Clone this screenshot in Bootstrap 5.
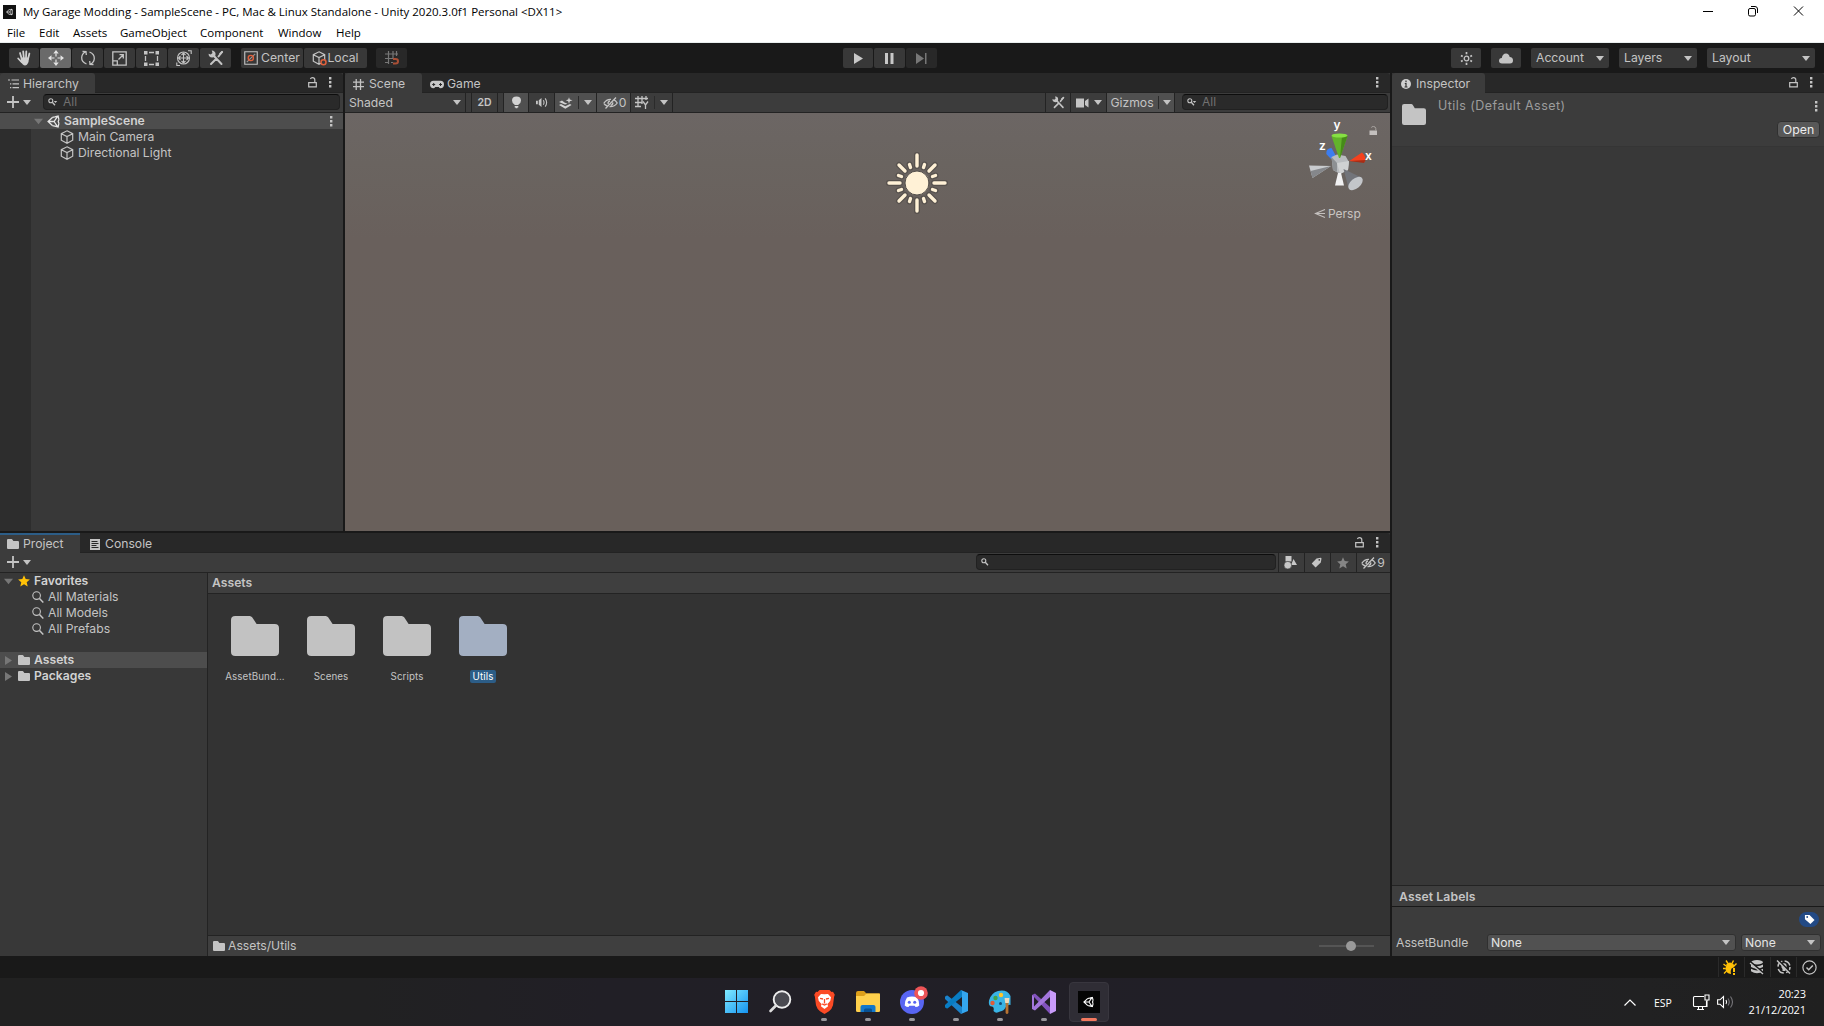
<!DOCTYPE html>
<html lang="en">
<head>
<meta charset="utf-8">
<title>My Garage Modding - SampleScene - Unity 2020.3.0f1 Personal</title>
<link href="https://cdn.jsdelivr.net/npm/bootstrap@5.3.0/dist/css/bootstrap.min.css" rel="stylesheet">
<style>
body{width:1824px;height:1026px;overflow:hidden;background:#191919;color:#c4c4c4;font:12.200px/16px Inter,"Liberation Sans",sans-serif}
svg{display:block;flex:none;overflow:visible}
.titlebar,.menubar{background:#fff;color:#000;font-family:"Open Sans","Noto Sans",sans-serif;white-space:nowrap}
.titlebar{height:24px;font-size:11.500px;padding-left:3px}
.menubar{height:19px;font-size:11.500px;border-bottom:1px solid #e9eeee}
.wtitle{margin-left:7px}
.m1{margin-left:7px;width:32px}.m2{width:34px}.m3{width:47px}.m4{width:80px}.m5{width:78px}.m6{width:58px}
.toolbar-main{height:30px;padding:0 9px}
.tool{height:20px;background:#383838;border-radius:2px;display:flex;align-items:center;justify-content:center;color:#c4c4c4}
.tool.on{background:#6a6a6a}
.tool.off{background:#282828}
.w30{width:30px}.w31{width:31px}.w62{width:62px}.w63{width:63px}.w78{width:78px}.w108{width:108px}
.gap1{gap:1px}.gap10{gap:10px}.gap12{gap:12px}
.drop{justify-content:space-between;padding:0 5px 0 5px}
.panel{background:#383838;display:flex;flex-direction:column;overflow:hidden}
.tabs{height:19px;background:#282828;display:flex;border-radius:3px 3px 0 0;flex:none}
.tabs .gap12{padding-right:11px}
.utab{background:#3c3c3c;height:20px;display:flex;align-items:center;padding-top:2px;border-radius:3px 3px 0 0;position:relative;z-index:1}
.utab.idle{background:none}
.bar{height:21px;background:#3c3c3c;border-top:1px solid #232323;border-bottom:1px solid #232323;display:flex;align-items:center;flex:none;padding-bottom:1px}
.find{height:16px;background:#2a2a2a;border:1px solid #212121;border-top-color:#0d0d0d;border-radius:4px;color:#717171;display:flex;align-items:center;padding-left:4px}
.find svg{color:#c4c4c4}
.find span{margin-left:5px;font-size:12px;line-height:12px}
.cell{height:19px;border-right:1px solid #232323;display:flex;align-items:center;justify-content:center;flex:none;margin-bottom:-1px}
.hi{background:#505050}
.sep{width:1px;height:13px;background:#2b2b2b}
.line16{height:16px;display:flex;align-items:center;flex:none;white-space:nowrap}
.line16 span{margin-left:4px}
.sel{background:#4d4d4d}
.fw-s{font-weight:600}
.strong-label{font-weight:600;color:#d2d2d2}
.gutter{width:31px;background:#2d2d2d}
.scene{flex:1;position:relative;background:linear-gradient(#6c6664 0,#6a6460 12%,#69605c 30%,#69605b 100%)}
.gizmo{position:absolute;left:960px;top:0}
.sunny{position:absolute;left:541px;top:39px}
.favs{width:208px;border-right:1px solid #232323;flex:none}
.asset{width:76px;text-align:center;font-size:9.800px;letter-spacing:.08px}
.asset svg{margin:0 auto 13px}
.asset .lbl{display:inline-block;line-height:13px;padding:0 3px;border-radius:2px}
.picked .lbl{background:#2c5d87;color:#fff}
.select-u{height:17px;background:#515151;border:1px solid #303030;border-radius:3px;color:#e4e4e4;display:flex;align-items:center;justify-content:space-between;padding:0 5px 0 3px}
.open-btn{width:43px;height:17px;background:#585858;border:1px solid #303030;color:#eee;font-size:12.300px;line-height:14px}
.insname{font-size:12.500px;letter-spacing:.46px;margin-left:12px;color:#9d9d9d}
.abname{width:91px;padding-top:1px}
.stat{width:26px;height:20px;border-left:1px solid #2a2a2a;display:flex;align-items:center;justify-content:center}
.taskbar{height:48px;background:linear-gradient(90deg,#212121 0,#212122 20%,#211f26 33%,#211f27 70%,#212122 90%,#202020);color:#fff;font-family:"Open Sans","Noto Sans",sans-serif;padding-top:4px}
.apps{margin-left:716px}
.app{width:40px;height:40px;margin-right:4px;display:flex;flex-direction:column;align-items:center;padding-top:8px;position:relative}
.app::after{content:"";position:absolute;bottom:1px;width:6px;height:3px;border-radius:2px;background:#98979b}
.app.plain::after{display:none}
.app.act{background:#2f2d35;border:1px solid #38363e;border-radius:4px;margin-left:1px}
.app.act::after{background:#f3795f;width:16px;bottom:0}
.tray{height:40px;padding-right:18px}
.tray-lang{font-size:10.500px;margin-left:18px;width:20px;padding-top:2px}
.tray-net{margin-left:19px}.tray-vol{margin-left:7px;margin-right:1px}
.clock{font-size:11px;width:71px;letter-spacing:-.1px}
</style>
<script src="https://cdn.jsdelivr.net/npm/bootstrap@5.3.0/dist/js/bootstrap.bundle.min.js"></script>
</head>
<body>
<svg width="0" height="0" class="position-absolute">
<symbol id="tri" viewBox="0 0 8 5"><path d="M0 0h8L4 5z" fill="currentColor"/></symbol>
<symbol id="dots" viewBox="0 0 3 11"><path d="M0 0h2.4v2.4H0zM0 4h2.4v2.4H0zM0 8h2.4v2.4H0z" fill="currentColor"/></symbol>
<symbol id="lock" viewBox="0 0 9 11"><path d="M.7 5.7h7.6v4.1H.7zM6.8 5.5V2.8Q6.8.7 4.5.7 2.9.7 2.4 1.9" fill="none" stroke="currentColor" stroke-width="1.2"/></symbol>
<symbol id="folder" viewBox="0 0 45 40" preserveAspectRatio="none"><path d="M4 0H17.500Q19 0 20 1.600L24 8H41Q45 8 45 12V36Q45 40 41 40H4Q0 40 0 36V4Q0 0 4 0z" fill="currentColor"/></symbol>
<symbol id="cube" viewBox="0 0 14 14"><path d="M7 .8 12.700 3.700V10.200L7 13.300 1.300 10.200V3.700zM1.300 3.700 7 6.500 12.700 3.700M7 6.500V13.300" fill="none" stroke="currentColor" stroke-width="1.2"/></symbol>
<symbol id="mag" viewBox="0 0 12 12"><circle cx="4.600" cy="4.600" r="3.800" fill="none" stroke="currentColor" stroke-width="1.100"/><path d="M7.500 7.500 11.300 11.500" stroke="currentColor" stroke-width="1.500"/></symbol>
<symbol id="smag" viewBox="0 0 10 8"><circle cx="2.800" cy="2.800" r="2" fill="none" stroke="currentColor" stroke-width="1.100"/><path d="M4.300 4.300 7 7.300" stroke="currentColor" stroke-width="1.300"/></symbol>
<symbol id="smagd" viewBox="0 0 10 8"><use href="#smag" width="10" height="8"/><path d="M5.800 3h3.400L7.500 5z" fill="currentColor"/></symbol>
<symbol id="plus" viewBox="0 0 12 12"><path d="M6 0v12M0 6h12" stroke="currentColor" stroke-width="1.800"/></symbol>
<symbol id="wrench" viewBox="0 0 16 16"><path d="M5 5 13.500 14M3 14 8 9M10.500 6.500 14 2" stroke="currentColor" stroke-width="2" stroke-linecap="round"/><path d="M3.700.6A3.500 3.500 0 1 1 .6 3.800L2.800 4.500 4.500 3z" fill="currentColor"/><path d="M11 3.500 14 .8 15.200 2 12.500 5z" fill="currentColor"/></symbol>
<symbol id="eye" viewBox="0 0 15 12"><path d="M.8 6.300Q3.500 2 8 2.300M10.500 2.600Q13 3.800 14.200 6Q11.500 10 6.500 9.700M4.200 8.900Q2 8 .8 6.300M13 .5 2.500 11.500M5.200 7.200Q4.500 4.500 7 3.800M9.800 5.500Q10 8 7.600 8.300" fill="none" stroke="currentColor" stroke-width="1.300"/></symbol>
<symbol id="star" viewBox="0 0 12 12"><path d="M6 .2 7.700 4.100 11.900 4.500 8.700 7.300 9.700 11.500 6 9.200 2.300 11.500 3.300 7.300.1 4.500 4.300 4.100z" fill="currentColor"/></symbol>
<symbol id="tag" viewBox="0 0 12 12"><path d="M6 1.500 10.500.8Q11.500.8 11.400 2L10.700 6 5 11.400.8 7.200z" fill="currentColor"/><circle cx="9" cy="3.200" r=".9" fill="#333"/></symbol>
<symbol id="unity" viewBox="0 0 24 24"><path d="M10 4.500 2 12 10 19.500M14.500 3.500 20.500 2 22 8.500M14.500 20.500 20.500 22 22 15.500M2.500 12H13L19.500 2.500M13 12 19.500 21.500M10 4.500 14.500 3.500M10 19.500 14.500 20.500M22 8.500 20.700 12 22 15.500" fill="none" stroke="currentColor" stroke-width="2.400"/></symbol>
<symbol id="spk" viewBox="0 0 14 12"><path d="M1 4h2v4H1zM4 3.500 7 1v10L4 8.500z" fill="currentColor"/><path d="M9 3.500q1.500 2.500 0 5M11 1.500q3.200 4.500 0 9" fill="none" stroke="currentColor" stroke-width="1.200"/></symbol>
<symbol id="hash" viewBox="0 0 12 12"><path d="M3.500 0v12M8.200 0v12M0 3.500h12M0 8.200h12" stroke="currentColor" stroke-width="1.400"/></symbol>
</svg>

<header>
<div class="titlebar d-flex align-items-center">
<svg width="13" height="14" viewBox="0 0 13 14"><path d="M0 0h13v14H0z" fill="#111"/><use href="#unity" x="3" y="3.500" width="7" height="7" color="#fff"/></svg>
<span class="wtitle">My Garage Modding - SampleScene - PC, Mac &amp; Linux Standalone - Unity 2020.3.0f1 Personal &lt;DX11&gt;</span>
<svg class="ms-auto" width="122" height="20" viewBox="0 0 122 20" fill="none" stroke="#000"><path d="M1 9.500h10M92 4.500 101 13.500M101 4.500 92 13.500"/><rect x="46.500" y="6.500" width="7" height="7.500" rx="1.500"/><path d="M49 4.500h4Q55.500 4.500 55.500 7v4"/></svg>
</div>
<nav class="menubar d-flex align-items-center">
<span class="m1">File</span><span class="m2">Edit</span><span class="m3">Assets</span><span class="m4">GameObject</span><span class="m5">Component</span><span class="m6">Window</span><span>Help</span>
</nav>
</header>

<section class="toolbar-main d-flex align-items-center" aria-label="Tools">
<div class="d-flex w-100">
 <div class="d-flex gap1">
 <div class="tool w30"><svg width="15" height="16" viewBox="0 0 15 16"><path d="M4.800 9 3 3M6.800 8 6.200 1.500M9 8 9.300 1.500M11 9 12.400 3.500M4.500 12 1.200 8.500" stroke="#d0d0d0" stroke-width="1.800" stroke-linecap="round"/><path d="M4 7.500h8L11.500 12Q10 15.500 8 15.500 6 15.500 3.500 11.500z" fill="#d0d0d0"/></svg></div>
 <div class="tool w31 on"><svg width="16" height="16" viewBox="0 0 16 16"><path d="M8 0 10.700 3.500H5.300zM8 16 5.300 12.500h5.400zM0 8 3.500 5.300v5.400zM16 8 12.500 10.700V5.300z" fill="#e4e4e4"/><path d="M8 3.500v3M8 9.500v3M3.500 8h3M9.500 8h3" stroke="#e4e4e4" stroke-width="1.200"/></svg></div>
 <div class="tool w31"><svg width="16" height="16" viewBox="0 0 16 16" fill="none" stroke="#c4c4c4" stroke-width="1.300"><path d="M6.500 14Q1.500 12 1.700 7.500 2 3.500 5.500 2M9.500 2Q14.500 4 14.300 8.500 14 12.500 10.500 14M2.500 1.500 6 1.700 6.300 5M13.500 14.500 10 14.300 9.700 11"/></svg></div>
 <div class="tool w31"><svg width="15" height="15" viewBox="0 0 15 15" fill="none" stroke="#c4c4c4" stroke-width="1.300"><path d="M.8.8h13.400v13.400H.8zM.8 9.800h4.500v4.400M6.500 8.500 11.200 3.800M7.500 3.700h3.800v3.800"/></svg></div>
 <div class="tool w31"><svg width="15" height="15" viewBox="0 0 15 15"><path d="M0 0h3.500v3.500H0zM11.500 0H15v3.500h-3.500zM0 11.500h3.500V15H0zM11.500 11.500H15V15h-3.500z" fill="#c4c4c4"/><path d="M5 1.500h5M5 13.500h5M1.500 5v5M13.500 5v5" stroke="#c4c4c4" stroke-width="1.300"/></svg></div>
 <div class="tool w31"><svg width="16" height="16" viewBox="0 0 16 16" fill="none" stroke="#c4c4c4" stroke-width="1.100"><circle cx="7.500" cy="8" r="6"/><path d="M7.500 3v10M2.500 8h10M5.500 5l2-2 2 2M5.500 11l2 2 2-2M4.500 6l-2 2 2 2M10.500 6l2 2-2 2M12 .8h3.200V4M.8 12.500v3H4"/></svg></div>
 <div class="tool w31"><svg width="16" height="16"><use href="#wrench"/></svg></div>
 </div>
 <div class="d-flex gap1" style="margin-left:10px">
 <div class="tool w62"><svg width="14" height="14" viewBox="0 0 15 15" fill="none" stroke="#c4c4c4" stroke-width="1.200"><path d="M.8.8h13.400v13.400H.8z"/><path d="M3 12 12 3" stroke="#999"/><circle cx="7.300" cy="7.500" r="2.800" stroke="#e0603c" stroke-width="1.500"/></svg><span style="margin-left:3px">Center</span></div>
 <div class="tool w63"><svg width="15" height="15" viewBox="0 0 15 15"><use href="#cube" width="14" height="14"/><circle cx="11.500" cy="11.300" r="2.500" fill="#383838" stroke="#e0603c" stroke-width="1.500"/></svg><span>Local</span></div>
 </div>
 <div class="tool off w31" style="margin-left:9px"><svg width="14" height="14" viewBox="0 0 14 14" fill="none"><path d="M3.500 0v13M8 0v7M11.500 0v5M0 3h13M0 7.500h8M0 11.500h4M6 11.500h2" stroke="#777" stroke-width="1.200"/><path d="M8 8h2.500q2.500 0 2.500 2.200 0 2.300-2.500 2.300H8" stroke="#a94f35" stroke-width="2"/></svg></div>
 <div class="d-flex gap1" style="margin-left:436px">
 <div class="tool w30"><svg width="9" height="11"><path d="M0 0 9 5.500 0 11z" fill="#c8c8c8"/></svg></div>
 <div class="tool w31"><svg width="9" height="11"><path d="M0 0h3v11H0zM5.500 0h3v11h-3z" fill="#c8c8c8"/></svg></div>
 <div class="tool w31 off"><svg width="11" height="11"><path d="M0 0 8 5.500 0 11zM9 0h1.500v11H9z" fill="#777"/></svg></div>
 </div>
 <div class="d-flex ms-auto gap10">
 <div class="tool w30"><svg width="13" height="13" viewBox="0 0 13 13"><circle cx="6.500" cy="6.500" r="2.300" fill="none" stroke="#c4c4c4" stroke-width="1.300"/><path d="M6.500 0v2.200M6.500 10.800V13M1 3.400l1.700 1M10.300 8.600l1.700 1M1 9.600l1.700-1M10.300 4.400l1.700-1" stroke="#c4c4c4" stroke-width="1.700"/></svg></div>
 <div class="tool w30"><svg width="14" height="11" viewBox="0 0 14 11"><path d="M3 10.500Q0 10.500 0 7.800 0 5.200 2.800 5 3.500.4 7 .4 10 .4 10.700 4 14 4.300 14 7.500 14 10.500 11 10.500z" fill="#c4c4c4"/></svg></div>
 <div class="tool drop w78">Account<svg width="8" height="5"><use href="#tri"/></svg></div>
 <div class="tool drop w78">Layers<svg width="8" height="5"><use href="#tri"/></svg></div>
 <div class="tool drop w108">Layout<svg width="8" height="5"><use href="#tri"/></svg></div>
 </div>
</div>
</section>

<main class="d-flex" style="height:883px;gap:2px">
<div class="d-flex flex-column" style="width:1390px;gap:2px">
 <div class="d-flex" style="height:458px;gap:2px">
 <section class="panel" style="width:343px">
  <div class="tabs"><div class="utab" style="width:95px;padding-left:8px"><svg width="11" height="10" viewBox="0 0 11 10"><path d="M0 1h2M3.500 1H11M2 4.800h1.300M4.500 4.800H11M2 8.600h1.300M4.500 8.600H11" stroke="#c4c4c4" stroke-width="1.200"/></svg><span style="margin-left:4px">Hierarchy</span></div>
  <div class="ms-auto d-flex align-items-center gap12"><svg width="9" height="11"><use href="#lock"/></svg><svg width="3" height="11"><use href="#dots"/></svg></div></div>
  <div class="bar" style="padding-left:7px"><svg width="12" height="12"><use href="#plus"/></svg><svg style="margin-left:4px" width="8" height="5"><use href="#tri"/></svg><div class="find" style="width:297px;margin-left:12px"><svg width="10" height="8"><use href="#smagd"/></svg><span>All</span></div></div>
  <div class="line16 sel" style="padding-left:34px"><svg width="9" height="7" color="#777"><use href="#tri"/></svg><svg style="margin-left:4px" width="13" height="13" color="#e6e6e6"><use href="#unity"/></svg><span class="strong-label">SampleScene</span><svg class="ms-auto" style="margin-right:10px" width="3" height="11"><use href="#dots"/></svg></div>
  <div class="d-flex flex-fill"><div class="gutter"></div><div class="flex-fill" style="padding-left:29px">
   <div class="line16"><svg width="14" height="14"><use href="#cube"/></svg><span>Main Camera</span></div>
   <div class="line16"><svg width="14" height="14"><use href="#cube"/></svg><span>Directional Light</span></div></div></div>
 </section>
 <section class="panel" style="width:1045px">
  <div class="tabs"><div class="utab" style="width:77px;padding-left:8px"><svg width="11" height="11"><use href="#hash"/></svg><span style="margin-left:5px">Scene</span></div>
  <div class="utab idle" style="padding-left:8px"><svg width="14" height="9" viewBox="0 0 14 9"><path d="M3.500.8h7Q14 .8 14 4.500T10.500 8.200Q9.500 8.200 8.800 7H5.200Q4.500 8.200 3.500 8.200 0 8.200 0 4.500T3.500.8" fill="#c8c8c8"/><path d="M2.200 4.500h3M3.700 3v3M9 4.500h3M10.500 3v3" stroke="#282828"/></svg><span style="margin-left:3px">Game</span></div>
  <svg class="ms-auto" style="margin:4px 11px 0 0" width="3" height="11"><use href="#dots"/></svg></div>
  <div class="bar">
   <div class="cell justify-content-between" style="width:121px;padding:0 4px"><span>Shaded</span><svg width="8" height="5"><use href="#tri"/></svg></div>
   <div class="cell" style="width:6px"></div>
   <div class="cell fw-s" style="width:26px;font-size:10.500px">2D</div>
   <div class="cell" style="width:6px"></div>
   <div class="cell hi" style="width:25px"><svg width="9" height="13" viewBox="0 0 9 13"><path d="M2.500 8.500Q0 7 0 4.400 0 .4 4.500.4T9 4.400Q9 7 6.500 8.500V9h-4zM2.700 10h3.600v1.500H5.500l-.2.800H3.700l-.2-.8h-.8z" fill="#d2d2d2"/></svg></div>
   <div class="cell" style="width:26px"><svg width="13" height="11"><use href="#spk"/></svg></div>
   <div class="cell hi" style="width:42px;gap:5px"><svg width="14" height="12" viewBox="0 0 14 12"><path d="M0 5 3 3.500 5.500 5.500 8.500 6.800 6 7.500zM0 8 2 7 6.300 9.200 11 7 12.500 8 6.300 11.700zM10 .2l.8 2.300 2.700.8-2.700.9-.8 2.500-.8-2.500-2.400-.9 2.400-.8z" fill="#d2d2d2"/></svg><span class="sep"></span><svg width="8" height="5"><use href="#tri"/></svg></div>
   <div class="cell hi" style="width:34px;padding-left:2px"><svg width="15" height="12"><use href="#eye"/></svg><span style="margin-left:1px">0</span></div>
   <div class="cell" style="width:42px;gap:5px"><svg width="14" height="13" viewBox="0 0 14 13" fill="none" stroke="#c4c4c4" stroke-width="1.300"><path d="M3 0v11M7 0v8M11 0v4M0 2.500h13M0 6.500h7M0 10.500h6M8 5.500l2.500 3.500L13 5.500M10.500 9v4"/></svg><span class="sep"></span><svg width="8" height="5"><use href="#tri"/></svg></div>
   <div class="cell ms-auto" style="width:1px"></div>
   <div class="cell" style="width:25px"><svg width="13" height="13"><use href="#wrench"/></svg></div>
   <div class="cell" style="width:36px;gap:5px"><svg width="13" height="10" viewBox="0 0 13 10"><path d="M0 .5h8v9H0zM9 3l3.500-2.500v9L9 7z" fill="#c4c4c4"/></svg><svg width="8" height="5"><use href="#tri"/></svg></div>
   <div class="cell hi" style="width:68px;gap:4px"><span>Gizmos</span><span class="sep"></span><svg width="8" height="5"><use href="#tri"/></svg></div>
   <div class="find" style="width:206px;margin:0 2px 0 7px"><svg width="10" height="8"><use href="#smagd"/></svg><span>All</span></div>
  </div>
  <div class="scene">
  <svg class="sunny" width="62" height="62" viewBox="-31 -31 62 62" stroke-linecap="round">
  <path id="rays" d="M0-28V-17M0 28V17M-28 0H-17M28 0H17M-18-18-12-12M18-18 12-12M-18 18-12 12M18 18 12 12M-7.500-18.500-6.500-15.500M7.500-18.500 6.500-15.500M-7.500 18.500-6.500 15.500M7.500 18.500 6.500 15.500M-18.500-7.500-15.500-6.500M18.500-7.500 15.500-6.500M-18.500 7.500-15.500 6.500M18.500 7.500 15.500 6.500" stroke="#484440" stroke-width="6" opacity=".55"/>
  <path d="M0-28V-17M0 28V17M-28 0H-17M28 0H17M-18-18-12-12M18-18 12-12M-18 18-12 12M18 18 12 12M-7.500-18.500-6.500-15.500M7.500-18.500 6.500-15.500M-7.500 18.500-6.500 15.500M7.500 18.500 6.500 15.500M-18.500-7.500-15.500-6.500M18.500-7.500 15.500-6.500M-18.500 7.500-15.500 6.500M18.500 7.500 15.500 6.500" stroke="#fff1d6" stroke-width="3.400"/><circle r="12" fill="#fff1d6" stroke="#55504b"/></svg>
  <svg class="gizmo" width="85" height="115" viewBox="1305 113 85 115">
   <path d="M1331 166 1309 165.500 1312.500 178z" fill="#c9cbce"/><path d="M1331 166 1310.500 171 1312.500 178z" fill="#85878b"/>
   <path d="M1331.500 148Q1326 148 1326.300 154L1331 159 1336 156z" fill="#3c7df0"/>
   <path d="M1331.500 157 1337 154.500 1345.500 156 1349 162 1348 170 1340 174 1333 170z" fill="#b9bcbf"/><path d="M1331.500 157 1337 163 1337 172 1333 170z" fill="#8d9093"/><path d="M1337 163 1349 161 1348 170 1340 174z" fill="#cfd1d2"/>
   <path d="M1343.500 169 1362.500 178 1348.500 188z" fill="#72747a"/><ellipse cx="1355.500" cy="183.500" rx="8.500" ry="5" transform="rotate(-40 1355.500 183.500)" fill="#c3c6ca"/>
   <path d="M1338 173h3L1344 185.500H1335z" fill="#f1f1f2"/>
   <path d="M1331.500 136H1347.500L1340 158H1339z" fill="#62b32a"/><path d="M1342 136h5.500L1340 158z" fill="#468a19"/><ellipse cx="1339.500" cy="135.500" rx="8" ry="2" fill="#86e043"/>
   <path d="M1349.300 161 1362 152.500Q1366.300 156 1365 162z" fill="#f4411e"/><path d="M1349.300 161 1365.500 160 1364 163z" fill="#a72e16"/>
   <g fill="#fff" font-size="12" font-weight="600" font-family="Inter"><text x="1333.500" y="129">y</text><text x="1319" y="149.500">z</text><text x="1365" y="159.500">x</text></g>
   <path d="M1369.500 130.500h7.500v4.500h-7.500z" fill="#c4c0be"/><path d="M1375.800 130.500v-2q-.3-2-2.300-2-1.700 0-2.200 1" fill="none" stroke="#aaa5a2"/>
   <path d="M1325 209.500 1315.500 213.500 1325 217.500M1325 213.500h-9" fill="none" stroke="#c4c0be" stroke-width="1.100"/><text x="1328" y="218" fill="#c9c5c2" font-size="12">Persp</text>
  </svg>
  </div>
 </section>
 </div>
 <section class="panel flex-fill">
  <div class="tabs"><div class="utab" style="width:80px;padding-left:7px;border-top:2px solid #2c5d87;border-radius:0;padding-top:0"><svg width="12" height="10"><use href="#folder"/></svg><span style="margin-left:4px">Project</span></div>
  <div class="utab idle" style="padding-left:10px"><svg width="10" height="11" viewBox="0 0 10 11"><path d="M0 0h10v11H0z" fill="#c4c4c4"/><path d="M1.500 2.500h6M1.500 4.500h7M1.500 6.500h5M1.500 8.500h7" stroke="#282828"/></svg><span style="margin-left:5px">Console</span></div>
  <div class="ms-auto d-flex align-items-center gap12"><svg width="9" height="11"><use href="#lock"/></svg><svg width="3" height="11"><use href="#dots"/></svg></div></div>
  <div class="bar" style="padding-left:7px"><svg width="12" height="12"><use href="#plus"/></svg><svg style="margin-left:4px" width="8" height="5"><use href="#tri"/></svg>
  <div class="find ms-auto" style="width:300px;margin-right:2px"><svg width="10" height="8"><use href="#smag"/></svg></div>
  <div class="cell" style="width:1px"></div>
  <div class="cell" style="width:26px;padding-right:2px"><svg width="13" height="13" viewBox="0 0 13 13"><path d="M1.500 0h6v5.500h-6zM9.500 3 13 9H7z" fill="#c8c8c8"/><circle cx="3.800" cy="9.200" r="3.800" fill="#c8c8c8" stroke="#3c3c3c" stroke-width=".6"/></svg></div>
  <div class="cell" style="width:26px;padding-right:2px"><svg width="11" height="11"><use href="#tag"/></svg></div>
  <div class="cell" style="width:26px;color:#858585;padding-right:1px"><svg width="12" height="12"><use href="#star"/></svg></div>
  <div class="cell border-0" style="width:33px;padding-right:1px"><svg width="15" height="12"><use href="#eye"/></svg><span style="margin-left:1px">9</span></div></div>
  <div class="d-flex flex-fill">
   <div class="favs">
    <div class="line16" style="padding-left:4px"><svg width="9" height="7" color="#777"><use href="#tri"/></svg><svg style="margin-left:5px" width="12" height="12" color="#ffc107"><use href="#star"/></svg><span class="strong-label ms-1 ps-1px">Favorites</span></div>
    <div class="line16" style="padding-left:32px"><svg width="12" height="12"><use href="#mag"/></svg><span>All Materials</span></div>
    <div class="line16" style="padding-left:32px"><svg width="12" height="12"><use href="#mag"/></svg><span>All Models</span></div>
    <div class="line16" style="padding-left:32px"><svg width="12" height="12"><use href="#mag"/></svg><span>All Prefabs</span></div>
    <div class="line16 sel" style="margin-top:15px;padding-left:5px"><svg width="7" height="9"><path d="M0 0 7 4.500 0 9z" fill="#777"/></svg><svg style="margin-left:6px" width="12" height="10"><use href="#folder"/></svg><span class="strong-label">Assets</span></div>
    <div class="line16" style="padding-left:5px"><svg width="7" height="9"><path d="M0 0 7 4.500 0 9z" fill="#777"/></svg><svg style="margin-left:6px" width="12" height="10"><use href="#folder"/></svg><span class="strong-label">Packages</span></div>
   </div>
   <div class="flex-fill d-flex flex-column" style="background:#333">
    <div class="fw-s" style="height:21px;background:#3f3f3f;border-bottom:1px solid #232323;padding:2px 4px">Assets</div>
    <div class="d-flex flex-fill" style="padding:22px 0 0 9px">
     <div class="asset"><svg width="48" height="40" color="#c2c2c2"><use href="#folder"/></svg><span class="lbl">AssetBund...</span></div>
     <div class="asset"><svg width="48" height="40" color="#c2c2c2"><use href="#folder"/></svg><span class="lbl">Scenes</span></div>
     <div class="asset"><svg width="48" height="40" color="#c2c2c2"><use href="#folder"/></svg><span class="lbl">Scripts</span></div>
     <div class="asset picked"><svg width="48" height="40" color="#a3afc2"><use href="#folder"/></svg><span class="lbl">Utils</span></div>
    </div>
    <div class="d-flex align-items-center" style="height:21px;background:#3f3f3f;border-top:1px solid #232323;padding:0 16px 0 5px"><svg width="12" height="10"><use href="#folder"/></svg><span style="margin-left:3px">Assets/Utils</span><svg class="ms-auto" width="55" height="10"><path d="M0 5h55" stroke="#5e5e5e" stroke-width="1.500"/><circle cx="32" cy="5" r="5" fill="#999"/></svg></div>
   </div>
  </div>
 </section>
</div>
<aside class="panel flex-fill">
 <div class="tabs"><div class="utab" style="width:93px;padding-left:9px"><svg width="10" height="10" viewBox="0 0 10 10"><circle cx="5" cy="5" r="5" fill="#d0d0d0"/><path d="M5 1.500v1.700M3.800 4.500H5V8M3.500 8h3" stroke="#333" stroke-width="1.200" fill="none"/></svg><span style="margin-left:5px">Inspector</span></div>
 <div class="ms-auto d-flex align-items-center gap12"><svg width="9" height="11"><use href="#lock"/></svg><svg width="3" height="11"><use href="#dots"/></svg></div></div>
 <div class="d-flex" style="height:55px;background:#3c3c3c;border-top:1px solid #232323;border-bottom:1px solid #353535;padding:5px 4px 0 10px">
  <svg style="margin-top:6px" width="24" height="21" color="#c4c4c4"><use href="#folder"/></svg>
  <span class="insname">Utils (Default Asset)</span>
  <div class="ms-auto d-flex flex-column align-items-end"><svg style="margin:3px 2px 9px 0" width="3" height="11"><use href="#dots"/></svg><button class="btn open-btn p-0 rounded-1">Open</button></div>
 </div>
 <div class="flex-fill"></div>
 <div class="fw-s d-flex align-items-center" style="height:22px;background:#3e3e3e;border-top:1px solid #232323;border-bottom:1px solid #191919;padding:2px 7px 0;letter-spacing:.1px">Asset Labels</div>
 <div class="d-flex flex-column" style="height:49px;background:#3c3c3c;padding:5px 3px 0 4px">
  <div class="d-flex justify-content-end pe-1"><span class="d-flex align-items-center justify-content-center rounded-pill" style="width:20px;height:15px;background:#234a85;margin-right:-2px"><svg width="11" height="11" viewBox="0 0 12 12"><path d="M1 1h5l5.500 5.500-4.500 4.500L1 5.800z" fill="#fff"/><circle cx="3.500" cy="3.300" r="1" fill="#234a85"/></svg></span></div>
  <div class="d-flex align-items-center" style="margin-top:7px"><span class="abname">AssetBundle</span><div class="select-u" style="width:249px;margin-right:5px">None<svg width="8" height="5" color="#c4c4c4"><use href="#tri"/></svg></div><div class="select-u" style="width:80px">None<svg width="8" height="5" color="#c4c4c4"><use href="#tri"/></svg></div></div>
 </div>
</aside>
</main>
<div class="d-flex justify-content-end align-items-center" style="height:22px;padding-right:2px">
 <div class="stat"><svg style="margin-right:3px" width="14" height="15" viewBox="0 0 14 15"><path d="M3.500 4Q7 .8 10.500 4L11.500 7 8.500 8.500Q7 11 8 14 3 13.500 2.500 9z" fill="#ffc107"/><path d="M5 3.500 3 .5M9 3.500 10.500.5M3 6 .5 4M2.800 8.500H0M3.500 11 1 13.500M11 6l2.500-2.500" stroke="#ffc107" stroke-width="1.400"/><path d="M11 8v4M11 13v2" stroke="#ffc107" stroke-width="2"/></svg></div>
 <div class="stat"><svg style="margin-right:1px" width="14" height="14" viewBox="0 0 14 14"><ellipse cx="7" cy="2.300" rx="6" ry="2.200" fill="#c4c4c4"/><path d="M1 4.500q6 3.500 12 0v2.500q-6 3.500-12 0zM1 8.800q6 3.500 12 0v2.500q-6 3.700-12 0z" fill="#c4c4c4"/><path d="M.5 2 14 13.500" stroke="#191919" stroke-width="2"/><path d="M0 3 13 14" stroke="#c4c4c4" stroke-width="1.300"/></svg></div>
 <div class="stat"><svg width="14" height="14" viewBox="0 0 14 14"><circle cx="7" cy="7" r="6" fill="none" stroke="#c4c4c4" stroke-width="1.500" stroke-dasharray="7 2.400"/><path d="M4.500 7.500Q4 3.500 7 3.300T9.600 7.200L8.500 8.500V11h-3V9z" fill="#c4c4c4"/><path d="M1 0 14 13" stroke="#191919" stroke-width="2"/><path d="M0 .5 13 13.500" stroke="#c4c4c4" stroke-width="1.400"/></svg></div>
 <div class="stat"><svg width="15" height="15" viewBox="0 0 15 15" fill="none" stroke="#c4c4c4" stroke-width="1.200"><circle cx="7.500" cy="7.500" r="6.600"/><path d="M4.500 7.500 6.700 9.700 10.800 5.500" stroke-width="1.500"/></svg></div>
</div>
<footer class="taskbar d-flex">
<div class="d-flex apps">
 <div class="app plain"><svg width="23" height="23" viewBox="0 0 23 23"><defs><linearGradient id="wi" gradientUnits="userSpaceOnUse" x1="0" y1="0" x2="23" y2="23"><stop stop-color="#80eaff"/><stop offset="1" stop-color="#1593f0"/></linearGradient></defs><path d="M0 0h11v11H0zM12 0h11v11H12zM0 12h11v11H0zM12 12h11v11H12z" fill="url(#wi)"/></svg></div>
 <div class="app plain"><svg width="22" height="23" viewBox="0 0 22 23"><circle cx="13" cy="9.500" r="8.300" fill="#4a4a51" stroke="#eee" stroke-width="1.900"/><path d="M7 15.500 1.500 21" stroke="#ddd" stroke-width="2.600" stroke-linecap="round"/></svg></div>
 <div class="app"><svg width="21" height="24" viewBox="0 0 21 24"><path d="M5.500 0h10l2 2 1.500-.2 1.800 3-.7 2-1.100 8.500Q18 19 15 21.200L10.500 24 6 21.200Q3 19 2 15.300L.9 6.800l-.7-2 1.800-3L3.500 2z" fill="#fb4a25"/><path d="M10.500 4.300 14 4l3 3.300-.7 3.500-1.600 2-1.400 1.200.8 2.300L10.500 19 6.900 16.300l.8-2.300-1.400-1.200-1.600-2L4 7.300 7 4z" fill="#fff"/><path d="M6 8.300l3 .7M15 8.300 12 9M10.500 9v4.500M8.200 13.800l2.300 1.200 2.300-1.200" stroke="#fb4a25" stroke-width="1.300" fill="none"/></svg></div>
 <div class="app"><svg width="24" height="23" viewBox="0 0 24 23"><path d="M0 3Q0 1 2 1H8L10.500 3.500H24V10H0z" fill="#dd9f1a"/><path d="M0 6H8L10.500 3.500H23Q24 3.500 24 5V21Q24 22 22.500 22H1.500Q0 22 0 20.500z" fill="#ffd04c"/><path d="M4.500 22V17Q4.500 15 6.500 15H17.500Q19.500 15 19.500 17V22z" fill="#1277ca"/><path d="M8 20Q8 18.500 9.500 18.500h5Q16 18.500 16 20v2H8z" fill="#075294"/></svg></div>
 <div class="app"><svg width="24" height="24" viewBox="0 0 24 24"><circle cx="12" cy="12" r="12" fill="#5865f2"/><path d="M7 7.500Q12 5.500 17 7.500 19.500 11 19.300 15.500 17.500 17 15.500 17L14.700 15.700H9.300L8.500 17Q6.500 17 4.700 15.500 4.500 11 7 7.500z" fill="#fff"/><circle cx="9.300" cy="12.200" r="1.500" fill="#5865f2"/><circle cx="14.700" cy="12.200" r="1.500" fill="#5865f2"/><circle cx="21" cy="3" r="6.800" fill="#ed5457"/><circle cx="21" cy="3" r="3.100" fill="#fff"/></svg></div>
 <div class="app"><svg width="24" height="24" viewBox="0 0 24 24"><path d="M1 6.800 2.200 5.700 3.500 5.600 18 17V23.500L17 24 1 9z" fill="#1a82cb"/><path d="M1 17.200 2.200 18.300 3.500 18.400 18 7V.5L17 0 1 15z" fill="#087cc3"/><path d="M17 0 24 3V21L17 24Q18 23.500 18 22V2Q18 .6 17 0z" fill="#34a6ef"/></svg></div>
 <div class="app"><svg width="24" height="24" viewBox="0 0 24 24"><path d="M10 1Q19-1 22.500 6V15Q20 14 17.500 17.500 16 21 12 21.500 8 24 5.500 21 6.500 17 4 16.500 0 16.500 1 10.500 3 3 10 1z" fill="#39b4e6"/><circle cx="4.500" cy="13" r="2.200" fill="#df5b39"/><circle cx="7.500" cy="8" r="2.200" fill="#42a548"/><circle cx="13" cy="5" r="2.200" fill="#ffc52a"/><circle cx="12.500" cy="13.500" r="1.500" fill="#144c77"/><path d="M17 8h4l-.6 6v9q-1.400 2-2.800 0v-9z" fill="#b87432"/><path d="M16.600 8h4.800l-.6 5h-3.600z" fill="#ecd9ba"/></svg></div>
 <div class="app"><svg width="24" height="24" viewBox="0 0 24 24"><path d="M0 5 3 3.500 18 17V24L2 7V17L0 19z" fill="#8253bd"/><path d="M0 19 3 20.500 18 7V0L2 16.500V7L0 5z" fill="#a376dc"/><path d="M18 0 24 3V21L18 24z" fill="#c99bfa"/></svg></div>
 <div class="app act"><svg width="22" height="22" viewBox="0 0 22 22"><path d="M0 0h22v22H0z" fill="#050505"/><use href="#unity" x="5" y="5.500" width="11" height="11" color="#fff"/></svg></div>
</div>
<div class="ms-auto d-flex align-items-center tray">
 <svg width="12" height="7"><path d="M.5 6.500 6 1 11.500 6.500" fill="none" stroke="#fff" stroke-width="1.200"/></svg>
 <span class="tray-lang">ESP</span>
 <svg class="tray-net" width="17" height="17" viewBox="0 0 17 17" fill="none" stroke="#fff" stroke-width="1.100"><path d="M11 2.500H1.500Q.5 2.500 .5 3.500V11.500Q.5 12.500 1.500 12.500H12.500Q13.500 12.500 13.500 11.500V7M4 15.500h7M5.500 12.500v3M9.500 12.500v3M12 1h4v5h-4zM14 6v7"/></svg>
 <svg class="tray-vol" width="17" height="14" viewBox="0 0 17 14" fill="none" stroke="#fff" stroke-width="1.100"><path d="M.6 4.800H3L6.500 1.500V12.500L3 9.200H.6zM9 5q1.200 2 0 4"/><path d="M11 3.500q2.500 3.500 0 7M13.500 1.500q4 5.500 0 11" stroke="#77767b"/></svg>
 <div class="text-end clock"><div>20:23</div><div>21/12/2021</div></div>
</div>
</footer>
</body>
</html>
